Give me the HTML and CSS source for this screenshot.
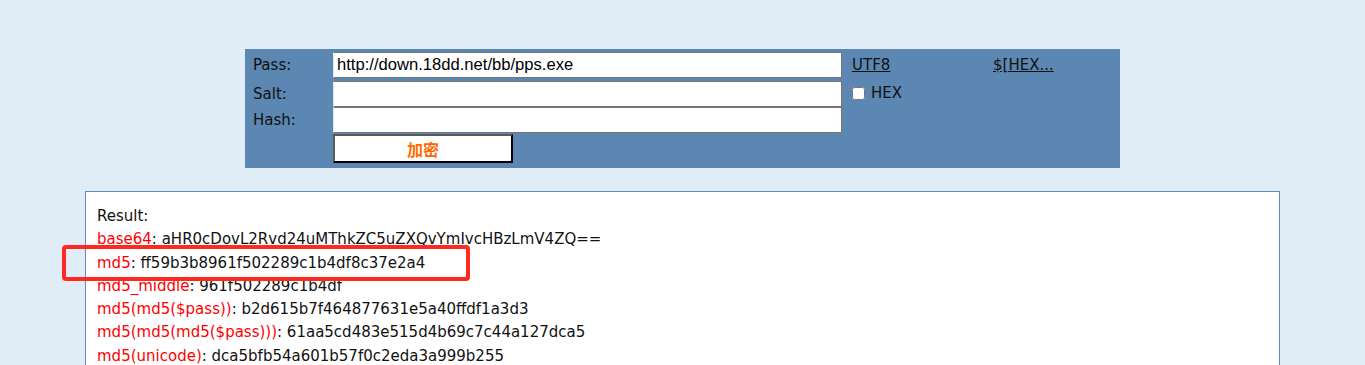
FILE: index.html
```html
<!DOCTYPE html>
<html lang="zh">
<head>
    <meta charset="UTF-8">
    <title>加密</title>
    <link rel="stylesheet" href="styles.css">
</head>
<body>
    <div class="panel">
        <div class="row row-pass">
            <span class="label">Pass:</span>
            <input class="field" type="text" value="http://down.18dd.net/bb/pps.exe">
            <a class="link link-utf" href="#">UTF8</a>
            <a class="link" href="#">$[HEX...</a>
        </div>
        <div class="row row-salt">
            <span class="label">Salt:</span>
            <input class="field" type="text">
            <label class="hex"><input type="checkbox"> HEX</label>
        </div>
        <div class="row row-hash">
            <span class="label">Hash:</span>
            <input class="field" type="text">
        </div>
        <div class="row row-btn">
            <span class="label"></span>
            <button class="go">加密</button>
        </div>
    </div>

    <div class="result">
        <div class="line">Result:</div>
        <div class="line"><span class="key">base64</span>: aHR0cDovL2Rvd24uMThkZC5uZXQvYmIvcHBzLmV4ZQ==</div>
        <div class="line"><span class="key">md5</span>: ff59b3b8961f502289c1b4df8c37e2a4</div>
        <div class="line"><span class="key">md5_middle</span>: 961f502289c1b4df</div>
        <div class="line"><span class="key">md5(md5($pass))</span>: b2d615b7f464877631e5a40ffdf1a3d3</div>
        <div class="line"><span class="key">md5(md5(md5($pass)))</span>: 61aa5cd483e515d4b69c7c44a127dca5</div>
        <div class="line"><span class="key">md5(unicode)</span>: dca5bfb54a601b57f0c2eda3a999b255</div>
        <div class="mark"></div>
    </div>
</body>
</html>
```

FILE: styles.css
```css
body {
    margin: 0;
    padding-top: 49px;
    background-color: #e1edf6;
    font-family: "DejaVu Sans", Verdana, sans-serif;
    font-size: 15px;
    color: #111;
}

.panel {
    width: 875px;
    margin: 0 auto;
    padding: 3px 0 5px 0;
    background-color: #5b87b2;
    box-sizing: border-box;
}

.row {
    display: flex;
    align-items: center;
}

.row-pass {
    height: 26px;
}

.row-salt {
    margin-top: 3px;
    height: 26px;
    align-items: flex-start;
}

.row-hash {
    height: 26px;
}

.row-btn {
    margin-top: 1px;
    height: 29px;
}

.label {
    width: 80px;
    padding-left: 8px;
    flex-shrink: 0;
}

.row-salt .label {
    line-height: 26px;
}

.field {
    width: 509px;
    height: 100%;
    box-sizing: border-box;
    margin: 0;
    padding: 0 3px;
    border: 1px solid #767676;
    border-left-color: #e6e6e6;
    background: #fff;
    font-family: "Liberation Sans", Arial, sans-serif;
    font-size: 16.6px;
    color: #000;
}

.link {
    color: #111;
    text-decoration: underline;
}

.link-utf {
    margin-left: 10px;
    width: 141px;
}

.hex {
    display: flex;
    align-items: center;
    margin-left: 9px;
    margin-top: 3px;
}

.hex input {
    width: 13px;
    height: 13px;
    margin: 0 6px 0 1px;
}

.go {
    width: 180px;
    height: 29px;
    padding: 0;
    background: #fff;
    border: 2px solid;
    border-color: #5a5a5a #000 #000 #5a5a5a;
    font-family: "Noto Sans CJK SC", sans-serif;
    font-size: 16px;
    font-weight: bold;
    color: #ff6a00;
}

.result {
    position: relative;
    width: 1195px;
    margin: 23px auto 0 auto;
    padding: 13px 11px 20px 11px;
    box-sizing: border-box;
    background: #fff;
    border: 1px solid #5b8bc8;
}

.line {
    line-height: 23.3px;
}

.key {
    color: #ff0000;
}

.mark {
    position: absolute;
    left: -24px;
    top: 53px;
    width: 408px;
    height: 36px;
    box-sizing: border-box;
    border: 4px solid #ff2a1f;
    border-radius: 4px;
}
```
